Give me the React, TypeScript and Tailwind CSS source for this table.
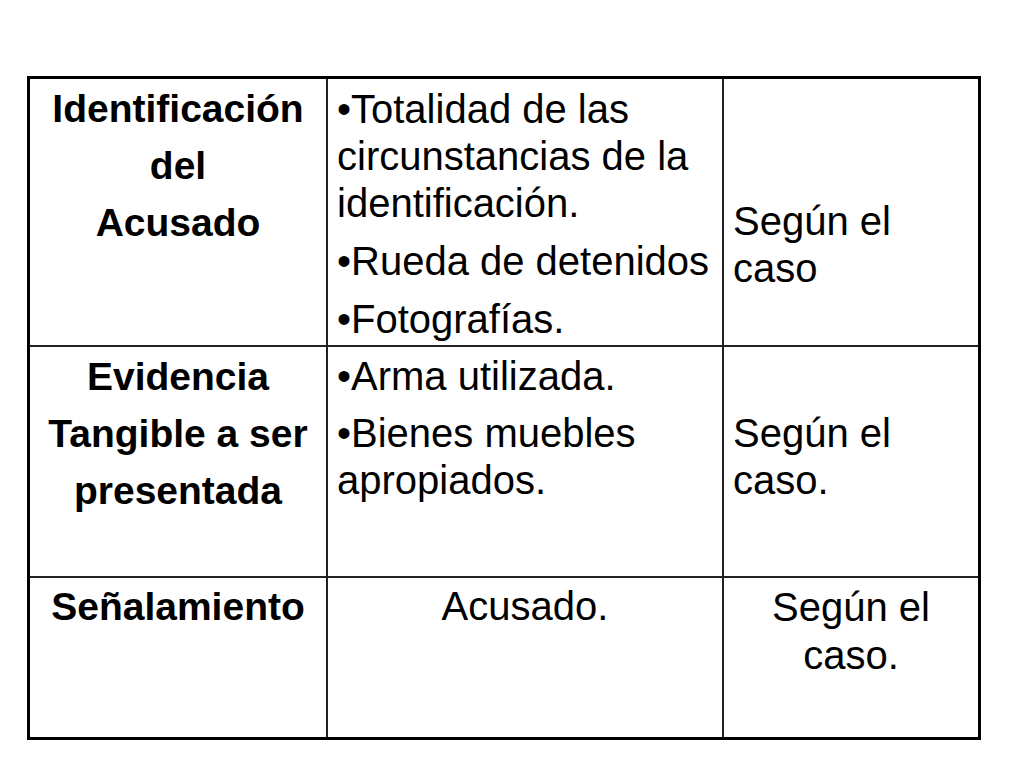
import React from 'react';

// Slide: evidence table (three rows, three columns)

const font = "font-['Liberation_Sans',Arial,Helvetica,sans-serif]";

function Lines({ items, bold = false }: { items: string[]; bold?: boolean }) {
  return (
    <div className="flex flex-col gap-[10px]">
      {items.map((t, i) => (
        <p key={i} className={bold ? 'font-bold text-[39px]' : ''}>
          {t}
        </p>
      ))}
    </div>
  );
}

export default function App() {
  return (
    <div className={`w-[1024px] h-[768px] bg-white pt-[76px] pl-[27px] ${font} text-black text-[40px] leading-[47px]`}>
      <div className="w-[954px] h-[664px] border-[3px] border-black grid grid-cols-[298px_396px_1fr] grid-rows-[268px_231px_1fr]">
        {/* Row 1 */}
        <div className="border-r-2 border-b-2 border-[#222] pt-[6px] text-center">
          <Lines bold items={['Identificación', 'del', 'Acusado']} />
        </div>
        <div className="border-r-2 border-b-2 border-[#222] pt-[7px] pl-[9px] pr-[4px]">
          <div className="flex flex-col gap-[11px]">
            <p>•Totalidad de las circunstancias de la identificación.</p>
            <p>•Rueda de detenidos</p>
            <p>•Fotografías.</p>
          </div>
        </div>
        <div className="border-b-2 border-[#222] pt-[119px] pl-[9px]">
          <p>Según el caso</p>
        </div>

        {/* Row 2 */}
        <div className="border-r-2 border-b-2 border-[#222] pt-[6px] text-center">
          <Lines bold items={['Evidencia', 'Tangible a ser', 'presentada']} />
        </div>
        <div className="border-r-2 border-b-2 border-[#222] pt-[6px] pl-[9px] pr-[4px]">
          <Lines items={['•Arma utilizada.', '•Bienes muebles apropiados.']} />
        </div>
        <div className="border-b-2 border-[#222] pt-[63px] pl-[9px] pr-[40px]">
          <p>Según el caso.</p>
        </div>

        {/* Row 3 */}
        <div className="border-r-2 border-[#222] pt-[5px] text-center">
          <p className="font-bold text-[39px]">Señalamiento</p>
        </div>
        <div className="border-r-2 border-[#222] pt-[5px] text-center">
          <p>Acusado.</p>
        </div>
        <div className="pt-[5px] text-center leading-[48px]">
          <p>
            Según el
            <br />
            caso.
          </p>
        </div>
      </div>
    </div>
  );
}
